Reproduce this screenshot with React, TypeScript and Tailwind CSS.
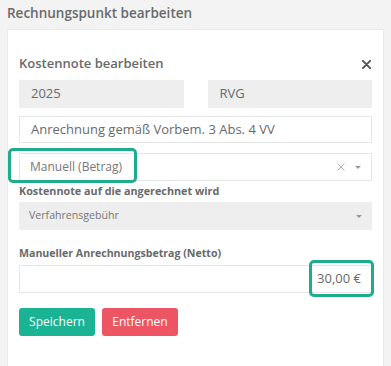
const Caret = () => (
  <span className="ml-[10px] inline-block w-0 h-0 border-l-[3px] border-r-[3px] border-t-[3px] border-l-transparent border-r-transparent border-t-[#999]" />
);

const Cross = ({ size, stroke, color }: { size: number; stroke: number; color: string }) => (
  <svg width={size} height={size} viewBox="0 0 10 10">
    <path d="M1 1 L9 9 M9 1 L1 9" stroke={color} strokeWidth={stroke} strokeLinecap="round" />
  </svg>
);

export default function App() {
  return (
    <div
      className="w-[391px] h-[366px] overflow-hidden bg-[#f3f3f4] px-[7px] text-[#676a6c]"
      style={{ fontFamily: '"Open Sans", sans-serif' }}
    >
      <div className="h-[29px] pt-[3px] text-[13.5px] font-semibold leading-[20px] text-[#676a6c]">
        Rechnungspunkt bearbeiten
      </div>

      <div className="bg-white border border-[#e7eaec] px-[11px] pt-[22px] h-[400px]">
        <div className="flex items-center justify-between h-[24px]">
          <div className="text-[13px] font-semibold">Kostennote bearbeiten</div>
          <div className="mr-[1px]">
            <Cross size={9} stroke={2.2} color="#555" />
          </div>
        </div>

        <div className="mt-[4px] grid grid-cols-2 gap-[24px]">
          <div className="h-[28px] bg-[#eeeeee] flex items-center px-[12px] text-[13px]">
            2025
          </div>
          <div className="h-[28px] bg-[#eeeeee] flex items-center px-[12px] text-[13px]">
            RVG
          </div>
        </div>

        <div className="mt-[8px] h-[27px] border border-[#e5e6e7] flex items-center px-[11px] text-[13px]">
          Anrechnung gemäß Vorbem. 3 Abs. 4 VV
        </div>

        <div className="relative mt-[10px]">
          <div className="h-[28px] border border-[#e5e6e7] flex items-center px-[10px] text-[12px] text-[#777]">
            <span className="flex-1">Manuell (Betrag)</span>
            <Cross size={8} stroke={1.2} color="#aaa" />
            <Caret />
          </div>
          <div className="absolute left-[-11px] top-[-5px] w-[129px] h-[35px] rounded-[5px] border-[3px] border-[#1fac8c]" />
        </div>

        <div className="mt-[2px] text-[10.8px] font-bold leading-[16px]">
          Kostennote auf die angerechnet wird
        </div>

        <div className="mt-[3px] h-[28px] bg-[#eeeeee] flex items-center px-[10px] text-[10.6px] text-[#777]">
          <span className="flex-1">Verfahrensgebühr</span>
          <Caret />
        </div>

        <div className="mt-[15px] text-[10.6px] font-bold leading-[16px]">
          Manueller Anrechnungsbetrag (Netto)
        </div>

        <div className="relative mt-[4px]">
          <div className="h-[28px] border border-[#e5e6e7] flex items-center justify-end px-[10px] text-[13px]">
            30,00 €
          </div>
          <div className="absolute right-[-2px] top-[-5px] w-[65px] h-[37px] rounded-[5px] border-[3px] border-[#1fac8c]" />
        </div>

        <div className="mt-[15px] flex gap-[7px]">
          <button className="h-[28px] w-[76px] rounded-[3px] bg-[#1ab394] text-white text-[12px]">
            Speichern
          </button>
          <button className="h-[28px] w-[76px] rounded-[3px] bg-[#ed5565] text-white text-[12px]">
            Entfernen
          </button>
        </div>
      </div>
    </div>
  );
}
